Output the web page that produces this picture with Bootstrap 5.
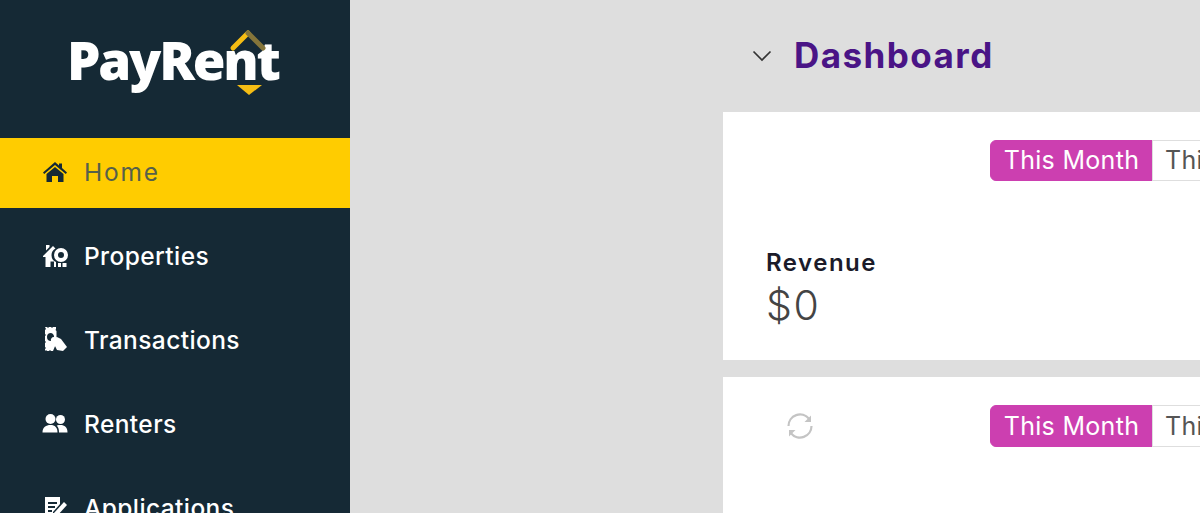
<!DOCTYPE html>
<html lang="en">

<head>
  <meta charset="UTF-8">
  <title>PayRent Dashboard</title>
  <meta name="viewport" content="width=device-width, initial-scale=1">

  <link href="https://cdn.jsdelivr.net/npm/bootstrap@5.3.3/dist/css/bootstrap.min.css" rel="stylesheet">

  <style>
    html,
    body {
      height: 100%;
      overflow: hidden;
    }

    body {
      background-color: #dedede;
      font-family: "Inter", "Liberation Sans", sans-serif;
    }

    .app-shell {
      height: 513px;
      width: 1200px;
    }

    .side-panel {
      width: 350px;
      flex: 0 0 350px;
      height: 513px;
      overflow: hidden;
      background-color: #152935;
    }

    .brand-box {
      height: 138px;
      padding-top: 29px;
    }

    .brand-logo {
      width: 212px;
      height: 68px;
      overflow: visible;
    }

    .brand-word {
      font-family: "Open Sans", "Liberation Sans", sans-serif;
      font-size: 53px;
      font-weight: 800;
      fill: #fff;
    }

    .side-link {
      height: 70px;
      margin-bottom: 14px;
      padding-left: 42px;
      padding-bottom: 2px;
      color: #fff;
      font-size: 24.500px;
      font-weight: 500;
      letter-spacing: 0.400px;
      text-decoration: none;
    }

    .side-link:hover {
      color: #fff;
    }

    .side-link.is-current {
      background-color: #ffcc00;
      color: #56604a;
      font-weight: 400;
      letter-spacing: 1.800px;
    }

    .side-icon {
      width: 26px;
      height: 26px;
      margin-right: 16px;
      flex: none;
      fill: currentColor;
    }

    .is-current .side-icon {
      color: #152935;
    }

    .main-column {
      width: 850px;
      padding-left: 373px;
    }

    .page-head {
      height: 112px;
      padding-left: 29px;
    }

    .page-title {
      color: #4a1486;
      font-size: 35px;
      font-weight: 700;
      letter-spacing: 1.450px;
      margin: 0 0 3px 22px;
    }

    .panel-card {
      width: 600px;
      background-color: #fff;
    }

    .first-panel {
      height: 248px;
      margin-bottom: 17px;
      padding: 28px 0 0 43px;
    }

    .second-panel {
      height: 200px;
      padding: 28px 0 0 43px;
    }

    .range-row {
      padding-left: 224px;
    }

    .range-group {
      flex-wrap: nowrap;
    }

    .range-group .btn {
      height: 41px;
      padding: 0 12px;
      font-size: 25px;
      line-height: 39px;
      font-weight: 400;
      letter-spacing: 0.300px;
      white-space: nowrap;
      border-color: #dedede;
      color: #555;
      background-color: #fff;
    }

    .range-group .btn.is-picked {
      width: 163px;
      flex: none;
      padding: 0;
      background-color: #cc3fb0;
      border-color: #cc3fb0;
      color: #fff;
    }

    .second-panel .btn {
      height: 42px;
    }

    .stat-name {
      margin-top: 67px;
      color: #1b1b2a;
      font-size: 24px;
      line-height: 30px;
      font-weight: 600;
      letter-spacing: 1.500px;
    }

    .stat-value {
      margin-top: 4px;
      color: #444;
      font-size: 41px;
      line-height: 46px;
      font-weight: 300;
      letter-spacing: 1.500px;
    }

    .sync-icon {
      position: absolute;
      left: 786px;
      top: 412px;
      width: 28px;
      height: 28px;
    }
  </style>
</head>

<body>
  <div class="app-shell d-flex position-relative">
    <!-- Sidebar -->
    <aside class="side-panel">
      <div class="brand-box d-flex justify-content-center">
        <svg class="brand-logo" viewBox="0 0 212 68" role="img" aria-label="PayRent">
          <text class="brand-word" x="-2" y="51" textLength="214" lengthAdjust="spacing">PayRent</text>
          <path d="M164 19 L179 4" fill="none" stroke="#f5bd14" stroke-width="5" stroke-linecap="round" />
          <path d="M179 4 L194 19" fill="none" stroke="#85753a" stroke-width="5" stroke-linecap="round" />
          <path d="M168 56 H193 L180 66 Z" fill="#f5bd14" />
        </svg>
      </div>

      <nav>
        <a href="#" class="side-link is-current d-flex align-items-center">
          <svg class="side-icon" viewBox="0 0 26 26">
            <path d="M13 3 L17 6.500 V4.500 H20 V9 L25 13.500 L23.800 15 L13 6 L2.200 15 L1 13.500 Z" />
            <path d="M13 8 L21.500 15 V23 H16 V17 H10 V23 H4.500 V15 Z" />
          </svg>
          Home
        </a>
        <a href="#" class="side-link d-flex align-items-center">
          <svg class="side-icon" viewBox="0 0 26 26">
            <path d="M1 13 L11 3 L13.500 5.500 A7.500 7.500 0 0 0 14 19 V24 H12 V18.500 H8.500 V24 H3.500 V14 H1 Z" />
            <path d="M4 2 H7.500 V4 L4 7.500 Z" />
            <path fill-rule="evenodd" d="M19 5 A7 7 0 1 1 19 19 A7 7 0 1 1 19 5 Z M19 9 A3 3 0 1 0 19 15 A3 3 0 1 0 19 9 Z" />
            <path d="M16 20 H19 V24 H16 Z M20.500 20 H24.500 V24 H20.500 Z" />
          </svg>
          Properties
        </a>
        <a href="#" class="side-link d-flex align-items-center">
          <svg class="side-icon" viewBox="0 0 26 26">
            <path fill-rule="evenodd" d="M3 0 H5 L6 1 L7 0 H9 L10 1 L11 0 H14 V2 L13.500 3 L14.500 4 V11 L16 12 L11 24 H9 L8 23 L7 24 H5 L4 23 L3 24 V22 L4 21 L3 20 V16 L4 15 L3 14 V9 L4 8 L3 7 V3 L4 2 Z M9 6 A4 4 0 1 0 9 14 A3 3 0 0 1 12 10 A4 4 0 0 0 9 6 Z" />
            <path d="M11 11 L15 10 L19 12 L25 20 L21 24 L15 23 L12 17 L9 15 Z" />
          </svg>
          Transactions
        </a>
        <a href="#" class="side-link d-flex align-items-center">
          <svg class="side-icon" viewBox="0 0 26 26">
            <circle cx="8.500" cy="8" r="5" />
            <circle cx="18.500" cy="8.500" r="4.500" />
            <path d="M0.500 21.500 C0.500 16 4 14 8.500 14 C13 14 15.500 16.500 15.500 21.500 Z" />
            <path d="M17 21.500 C17 18 16.200 16 14.700 14.800 C16 14 17.500 14 18.500 14 C22.500 14 25.500 16 25.500 21.500 Z" />
          </svg>
          Renters
        </a>
        <a href="#" class="side-link d-flex align-items-center">
          <svg class="side-icon" viewBox="0 0 26 26">
            <path fill-rule="evenodd" d="M3 2 H18 V9 L11 17 V22 H15 L18 19 V24 H3 Z M6 7 H15 V9 H6 Z M6 11 H13 V13 H6 Z M6 15 H10 V17 H6 Z" />
            <path d="M22 7 L25 10 L15 21 H12 V18 Z" />
          </svg>
          Applications
        </a>
      </nav>
    </aside>

    <!-- Main content -->
    <main class="main-column">
      <div class="page-head d-flex align-items-center">
        <svg width="20" height="12" viewBox="0 0 20 12" fill="none" stroke="#333" stroke-width="1.700">
          <path d="M1.500 1.500 L10 10 L18.500 1.500" />
        </svg>
        <h1 class="page-title">Dashboard</h1>
      </div>

      <section class="panel-card first-panel">
        <div class="range-row">
          <div class="btn-group range-group" role="group">
            <button type="button" class="btn is-picked">This Month</button>
            <button type="button" class="btn">This Year</button>
            <button type="button" class="btn">All Time</button>
          </div>
        </div>
        <div class="stat-name">Revenue</div>
        <div class="stat-value">$0</div>
      </section>

      <section class="panel-card second-panel">
        <div class="range-row">
          <div class="btn-group range-group" role="group">
            <button type="button" class="btn is-picked">This Month</button>
            <button type="button" class="btn">This Year</button>
            <button type="button" class="btn">All Time</button>
          </div>
        </div>
      </section>
    </main>

    <!-- Loading spinner sits over the second card -->
    <svg class="sync-icon" viewBox="0 0 28 28" fill="none" stroke="#c4c4c4" stroke-width="2.200">
      <path d="M2.500 14 A11.500 11.500 0 0 1 23 6.800" />
      <path d="M25.500 14 A11.500 11.500 0 0 1 5 21.200" />
      <path d="M25 3.500 V10 H18.500 Z" fill="#c4c4c4" stroke="none" />
      <path d="M3 24.500 V18 H9.500 Z" fill="#c4c4c4" stroke="none" />
    </svg>
  </div>

  <script src="https://cdn.jsdelivr.net/npm/bootstrap@5.3.3/dist/js/bootstrap.bundle.min.js"></script>
</body>

</html>
